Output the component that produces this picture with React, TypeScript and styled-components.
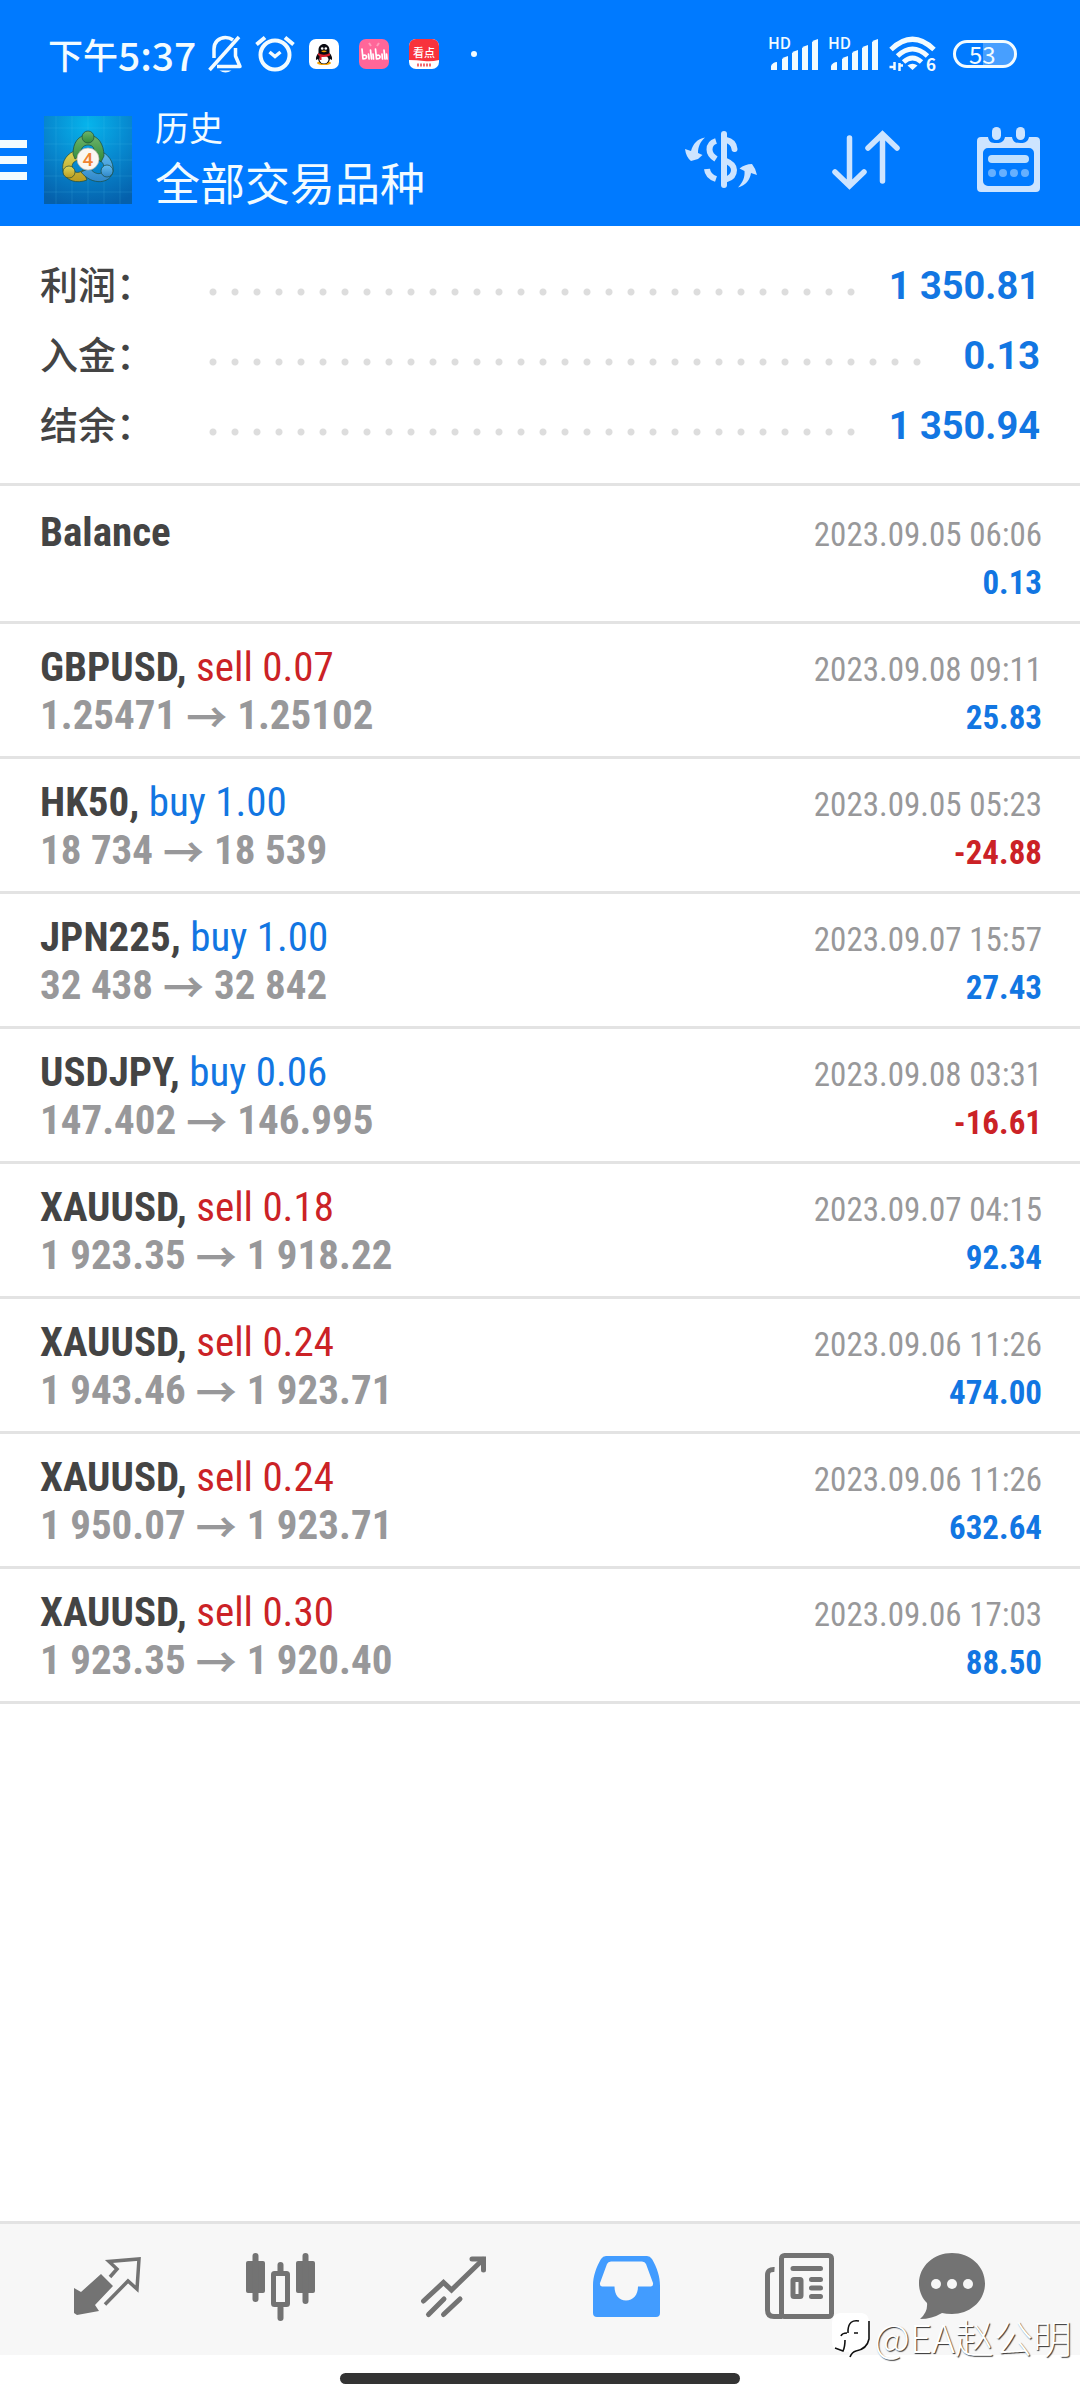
import React from "react";
import styled, { createGlobalStyle } from "styled-components";

const cjk = `"Noto Sans CJK SC", sans-serif`;
const condensed = `"Roboto Condensed", "Liberation Sans Narrow", Roboto, "Noto Sans CJK SC", sans-serif`;

const color = {
  brand: "#007aff",
  text: "#444444",
  muted: "#98989a",
  up: "#1276e2",
  down: "#cb2226",
  line: "#e3e3e3",
  nav: "#737373",
};

const GlobalStyle = createGlobalStyle`
  * { box-sizing: border-box; }
  body { margin: 0; background: #fff; font-family: ${cjk}; color: ${color.text}; }
  h1, h2, p, ul, dl, dd, dt { margin: 0; padding: 0; font-weight: 400; }
  ul { list-style: none; }
  button { border: 0; padding: 0; background: none; color: inherit; font: inherit; }
  svg { display: block; flex: none; overflow: visible; }
`;

const Page = styled.div`
  position: relative;
  min-height: 100vh;
  display: flex;
  flex-direction: column;
`;

const Header = styled.header`
  background: ${color.brand};
  color: #f2fbff;
  height: 226px;
`;

const StatusBar = styled.div`
  height: 108px;
  padding: 0 63px 0 48px;
  display: flex;
  align-items: center;
  justify-content: space-between;
`;

const StatusGroup = styled.div<{ $gap: number }>`
  display: flex;
  align-items: center;
  gap: ${(p) => p.$gap}px;
`;

const Clock = styled.div`
  display: flex;
  align-items: center;
  font-size: 35px;
  line-height: 40px;
  font-weight: 500;
`;

const ClockDigits = styled.span`
  font-size: 39px;
`;

const StatusApps = styled.div`
  display: flex;
  align-items: center;
  gap: 20px;
  margin-left: 2px;
`;

const NoticeDot = styled.span`
  width: 6px;
  height: 6px;
  margin-left: 12px;
  border-radius: 50%;
  background: currentColor;
`;

const Battery = styled.div`
  width: 64px;
  height: 28px;
  margin-left: 5px;
  border: 3px solid currentColor;
  border-radius: 14px;
  display: flex;
  align-items: center;
  padding-left: 13px;
  font-size: 24px;
  line-height: 22px;
  background: linear-gradient(90deg, transparent 47%, #479fff 47%) padding-box;
`;

const Toolbar = styled.div`
  height: 104px;
  padding-right: 40px;
  display: flex;
  align-items: center;
`;

const MenuButton = styled.button`
  width: 44px;
  height: 44px;
  display: flex;
  flex-direction: column;
  justify-content: center;
  gap: 8px;
`;

const MenuBar = styled.span`
  width: 27px;
  height: 8px;
  background: #f2fbff;
`;

const Titles = styled.div`
  flex: 1;
  margin-left: 23px;
`;

const Title = styled.h1`
  font-size: 34px;
  line-height: 44px;
`;

const Subtitle = styled.p`
  font-size: 45px;
  line-height: 66px;
`;

const Actions = styled.div`
  display: flex;
  align-items: center;
  gap: 75px;
  color: #cde4ff;
`;

const Summary = styled.dl`
  padding: 24px 40px 23px;
  border-bottom: 3px solid ${color.line};
`;

const SummaryRow = styled.div`
  height: 70px;
  display: flex;
  align-items: center;
`;

const SummaryLabel = styled.dt`
  width: 162px;
  margin-bottom: 4px;
  font-size: 38px;
  line-height: 56px;
  font-weight: 500;
`;

const Leader = styled.span`
  flex: 1;
  height: 8px;
  margin: 14px 30px 0 0;
  background: radial-gradient(circle at 11px 4px, #dddddd 3px, transparent 4px) 0 0 / 22px 8px repeat-x;
`;

const SummaryValue = styled.dd`
  margin-top: 2px;
  font-family: Roboto, sans-serif;
  font-weight: 700;
  font-size: 38px;
  line-height: 56px;
  color: ${color.up};
`;

const Deals = styled.ul`
  flex: 1;
  padding-top: 3px;
`;

const Deal = styled.li`
  height: 135px;
  padding: 19px 38px 0 40px;
  border-bottom: 3px solid ${color.line};
  font-family: ${condensed};
  display: flex;
  justify-content: space-between;
`;

const DealMain = styled.div`
  font-size: 41px;
  line-height: 48px;
  font-weight: 700;
`;

const Side = styled.span<{ $sell: boolean }>`
  font-weight: 400;
  color: ${(p) => (p.$sell ? color.down : color.up)};
`;

const Prices = styled.p`
  display: flex;
  gap: 10px;
  font-weight: 700;
  color: ${color.muted};
`;

const Arrow = styled.span`
  font-family: ${cjk};
`;

const DealInfo = styled.div`
  padding-top: 3px;
  font-size: 33px;
  line-height: 48px;
  text-align: right;
`;

const Time = styled.time`
  display: block;
  color: ${color.muted};
`;

const Profit = styled.p<{ $loss: boolean }>`
  font-weight: 700;
  color: ${(p) => (p.$loss ? color.down : color.up)};
`;

const Nav = styled.nav`
  height: 134px;
  padding: 0 21px 6px;
  display: flex;
  align-items: center;
  background: #f7f7f7;
  border-top: 3px solid ${color.line};
`;

const NavButton = styled.button<{ $active?: boolean }>`
  flex: 1;
  height: 100px;
  display: grid;
  place-items: center;
  color: ${(p) => (p.$active ? "#429cff" : color.nav)};
`;

const HomeArea = styled.div`
  height: 45px;
  padding-top: 18px;
`;

const HomePill = styled.div`
  width: 37%;
  height: 11px;
  margin: 0 auto;
  border-radius: 6px;
  background: #333;
`;

const Watermark = styled.div`
  position: absolute;
  right: 8px;
  bottom: 36px;
  display: flex;
  align-items: center;
  gap: 4px;
  font-size: 39px;
  line-height: 56px;
  font-weight: 300;
  color: #fff;
  text-shadow: 1px 1px 1px rgba(0, 0, 0, 0.8);
`;

const BellOff = () => (
  <svg width="35" height="38" viewBox="0 0 35 38" fill="none" stroke="currentColor" strokeWidth="3.500">
    <path d="M6 23V14C6 7 11 2.500 17.500 2.500C20.500 2.500 23 3.500 25 5" />
    <path d="M27.500 13V21L32 31.500H9" strokeLinejoin="round" />
    <path d="M1.500 35L31 2" />
    <path d="M11.500 35.500H23.500Q17.500 39.500 11.500 35.500Z" fill="currentColor" stroke="none" />
  </svg>
);

const Alarm = () => (
  <svg width="40" height="38" viewBox="0 0 40 38" fill="none" stroke="currentColor" strokeWidth="4">
    <circle cx="20" cy="20" r="14.500" />
    <path d="M1.500 9.500L10 2.500M30 2.500L38.500 9.500" />
    <path d="M14.500 17L20 21.500L25.500 17" strokeWidth="3.500" />
  </svg>
);

const PenguinApp = () => (
  <svg width="30" height="30" viewBox="0 0 30 30">
    <rect width="30" height="30" rx="7" fill="#fff" />
    <ellipse cx="15" cy="24" rx="7" ry="2" fill="#f6a300" />
    <path d="M7 21C6.500 18 8 15.500 9.500 14V11C9.500 7.500 12 5 15 5S20.500 7.500 20.500 11V14C22 15.500 23.500 18 23 21L21 20C20.500 23 18.500 25 15 25S9.500 23 9 20Z" fill="#0b0b12" />
    <ellipse cx="15" cy="20.500" rx="4.500" ry="4" fill="#fff" />
    <circle cx="13.200" cy="9.500" r="1.300" fill="#fff" />
    <circle cx="16.800" cy="9.500" r="1.300" fill="#fff" />
    <path d="M12 12Q15 11 18 12Q15 14.500 12 12Z" fill="#f6a300" />
    <path d="M9 14Q15 17.500 21 14V16.500Q17 18.500 12.500 18V21H10.500V17L9 16Z" fill="#d8202c" />
  </svg>
);

const VideoApp = () => (
  <svg width="30" height="30" viewBox="0 0 30 30">
    <rect width="30" height="30" rx="7" fill="#ff6699" />
    <path d="M10 4L12 7M20 4L18 7" stroke="#ff9dbd" strokeWidth="2" />
    <g fill="none" stroke="#fff" strokeWidth="1.700" strokeLinecap="round" strokeLinejoin="round">
      <path d="M3 10L4 20Q8 20 7.500 17.500Q7 15.500 4 16.500M9.500 15L10 20M11.500 11L12.500 20M14 15L14.500 20" />
      <path d="M16.500 10L17.500 20Q21.500 20 21 17.500Q20.500 15.500 17.500 16.500M23 15L23.500 20M25 11L26 20M27.500 15L28 20" />
    </g>
  </svg>
);

const NewsApp = () => (
  <svg width="30" height="30" viewBox="0 0 30 30">
    <rect width="30" height="30" rx="7" fill="#fff" />
    <path d="M0 21V7A7 7 0 0 1 7 0H23A7 7 0 0 1 30 7V21Q22 23 15 22T0 21Z" fill="#f8333c" />
    <text x="15" y="18" textAnchor="middle" fontFamily="Noto Sans CJK SC" fontWeight="500" fontSize="11" fill="#fff">看点</text>
    <path d="M8 26H22" stroke="#f26a70" strokeWidth="3" strokeDasharray="2 1" />
  </svg>
);

const Signal = () => (
  <svg width="49" height="34" viewBox="0 0 49 34" fill="currentColor">
    <text x="-1" y="12" fontFamily="Noto Sans CJK SC" fontWeight="500" fontSize="16">HD</text>
    <path d="M2 33V29Q4 25 8 25V33Z" />
    <path d="M13 33V22Q15 20 19 19V33Z" />
    <path d="M23 33V16Q25 14 29 13V33Z" />
    <path d="M33 33V11Q35 9 39 8V33Z" />
    <path d="M43 33V5Q45 3 49 2V33Z" />
  </svg>
);

const Wifi = () => (
  <svg width="48" height="36" viewBox="0 0 48 36" fill="none" stroke="currentColor" strokeWidth="5">
    <path d="M2 13.500Q23.500 -7 45 13.500" />
    <path d="M8.500 20Q23.500 6 38.500 20" />
    <path d="M14.500 26Q23.500 18 32.500 26" />
    <path d="M23.500 34L18.500 29.500Q23.500 26 28.500 29.500Z" fill="currentColor" stroke="none" />
    <path d="M5.500 26V34M0.500 31H5.500M10.500 35V27M10.500 29.500H14" strokeWidth="2.500" />
    <text x="37" y="35" fontFamily="Noto Sans CJK SC" fontWeight="700" fontSize="17" fill="currentColor" stroke="none">6</text>
  </svg>
);

const Logo = () => (
  <svg width="88" height="88" viewBox="0 0 88 88">
    <defs>
      <radialGradient id="sky" cx="0.5" cy="0.1" r="0.95">
        <stop offset="0" stopColor="#06b4ec" />
        <stop offset="0.5" stopColor="#0788cf" />
        <stop offset="1" stopColor="#0560ab" />
      </radialGradient>
      <linearGradient id="green" x1="0" y1="0" x2="0" y2="1">
        <stop offset="0" stopColor="#6fb56b" />
        <stop offset="1" stopColor="#2f8a3a" />
      </linearGradient>
      <linearGradient id="yellow" x1="0" y1="0" x2="0" y2="1">
        <stop offset="0" stopColor="#ddd85a" />
        <stop offset="1" stopColor="#b89a20" />
      </linearGradient>
      <linearGradient id="azure" x1="0" y1="0" x2="0" y2="1">
        <stop offset="0" stopColor="#63bdf0" />
        <stop offset="1" stopColor="#2f86c8" />
      </linearGradient>
    </defs>
    <rect width="88" height="88" fill="url(#sky)" />
    <path d="M12 0V88M28 0V88M44 0V88M60 0V88M76 0V88M0 12H88M0 28H88M0 44H88M0 60H88M0 76H88" stroke="#5cc6f0" strokeOpacity="0.16" />
    <g stroke="#1d4a3c" strokeWidth="0.700">
      <path d="M34 34C23 36 17 46 19 55C21 65 33 68 43 64L39 54C35 58 28 57 28 51C28 47 31 44 36 44Z" fill="url(#yellow)" />
      <path d="M55 35C64 37 70 46 69 55C67 68 48 70 37 56L46 52C51 60 60 59 60 52C60 47 57 44 52 44Z" fill="url(#azure)" />
      <path d="M29 38C29 27 34 19 44 19S60 28 60 40L57 46L50 40C51 32 49 29 44 29S36 33 37 39L31 43Z" fill="url(#green)" />
      <circle cx="44" cy="21" r="6" fill="url(#green)" />
      <circle cx="25" cy="56" r="6" fill="url(#yellow)" />
      <circle cx="63" cy="55" r="6" fill="url(#azure)" />
    </g>
    <circle cx="44" cy="43" r="11" fill="#faf7f2" stroke="#b9b3a6" strokeWidth="0.700" />
    <text x="44" y="50" textAnchor="middle" fontFamily="Roboto" fontWeight="500" fontSize="19" fill="#f08432">4</text>
  </svg>
);

const Currency = () => (
  <svg width="72" height="58" viewBox="0 0 72 58" fill="none" stroke="currentColor" strokeWidth="6">
    <path d="M31 10C26 11.500 24.500 15 24.500 18.500C24.500 22.500 27 25.500 31 28" />
    <path d="M22 38C22.500 43 26.500 46.500 31 48" />
    <path d="M39 3V54" strokeLinecap="round" />
    <path d="M41 9C46 10 49 13 49.500 18" strokeLinecap="round" />
    <path d="M41 30C46 32 49 35 49 39C49 44 46 47 41 48.500" />
    <g fill="currentColor" stroke="none">
      <path d="M0 18L6 20C8 13 12 8 20 6.500C15 11 13 16 13 22L17.500 24L13 28L6 30Q1 26 0 18Z" />
      <path d="M72 44L66 42C65 49 61 54 53 56.500C58 51 60 46 59.500 40L54.500 37.500Q60 33 67 33Q71 38 72 44Z" />
    </g>
  </svg>
);

const Sort = () => (
  <svg width="70" height="60" viewBox="0 0 70 60" fill="none" stroke="currentColor" strokeWidth="5.500" strokeLinecap="round">
    <path d="M17.500 8V55M3 42L17.500 56L32 42" />
    <path d="M50.500 51V5M36 18L50.500 4L65 18" />
  </svg>
);

const Calendar = () => (
  <svg width="63" height="66" viewBox="0 0 63 66" fill="currentColor">
    <path fillRule="evenodd" d="M4 10H11C12 15 14 16 19.500 16S27 14 28 10H35C36 15 38 16 43.500 16S51 14 52 10H59A4 4 0 0 1 63 14V61A4 4 0 0 1 59 65H4A4 4 0 0 1 0 61V14A4 4 0 0 1 4 10ZM11 21A5 5 0 0 0 6 26V54A5 5 0 0 0 11 59H52A5 5 0 0 0 57 54V26A5 5 0 0 0 52 21Z" />
    <rect x="15" y="0" width="9" height="13" rx="4.500" />
    <rect x="39" y="0" width="9" height="13" rx="4.500" />
    <rect x="11" y="28" width="41" height="8" rx="4" fill="#bfe0ff" />
    <g fill="#66b0ff">
      <circle cx="15" cy="46" r="4" />
      <circle cx="26" cy="46" r="4" />
      <circle cx="37" cy="46" r="4" />
      <circle cx="48" cy="46" r="4" />
    </g>
  </svg>
);

const QuotesIcon = () => (
  <svg width="67" height="68" viewBox="0 -4 67 68" fill="currentColor">
    <path d="M0 31L7 35L27 17L39 29L21 48L25 54L3 58L0 56Z" />
    <path d="M36 20L43 12L35 4.500L65 2L63 32L54 24L31 47.500" fill="none" stroke="currentColor" strokeWidth="3.500" />
  </svg>
);

const ChartIcon = () => (
  <svg width="70" height="68" viewBox="0 0 70 68" fill="currentColor">
    <rect x="0" y="8" width="19" height="32" rx="2" />
    <rect x="6.500" y="0" width="6" height="49" rx="3" />
    <rect x="50" y="8" width="19" height="32" rx="2" />
    <rect x="56.500" y="0" width="6" height="51" rx="3" />
    <rect x="31.500" y="9" width="6" height="12" rx="3" />
    <rect x="31.500" y="52" width="6" height="16" rx="3" />
    <rect x="27.500" y="20.500" width="14" height="31" rx="1" fill="none" stroke="currentColor" strokeWidth="5" />
  </svg>
);

const TradeIcon = () => (
  <svg width="66" height="68" viewBox="0 -3 66 68" fill="none" stroke="currentColor" strokeWidth="5" strokeLinecap="round">
    <path d="M2.500 45L22.500 26.500L30.500 34L62 3.500" />
    <path d="M51 3H62.500V14" />
    <path d="M7.500 58.500L23 43M22.500 58.500L39 43" />
  </svg>
);

const HistoryIcon = () => (
  <svg width="67" height="68" viewBox="0 -3 67 68" fill="currentColor">
    <path fillRule="evenodd" d="M13 0H54Q57 0 59 3C64 12 67 20 67 30V57A4 4 0 0 1 63 61H4A4 4 0 0 1 0 57V30C0 20 3 12 8 3Q10 0 13 0ZM18 5.500Q15 5.500 14 8L7 27Q6.500 30.500 9 30.500H21.500C21.500 39 26 44.500 33 44.500S45 39 45 30.500H58Q60.500 30.500 60 27L53 8Q52 5.500 49 5.500Z" />
  </svg>
);

const NewsIcon = () => (
  <svg width="69" height="68" viewBox="0 0 69 68" fill="none" stroke="currentColor" strokeWidth="5">
    <rect x="16.500" y="2.500" width="50" height="61" rx="3" />
    <path d="M9.500 16.500Q2.500 16 2.500 22V57Q2.500 63.500 9 63.500H17" />
    <path d="M28 15.500H55.500M46.500 26.500H55.500M46.500 35H55.500M46.500 43.500H55.500" strokeLinecap="round" />
    <rect x="28" y="26.500" width="8" height="17" rx="1" />
  </svg>
);

const ChatIcon = () => (
  <svg width="108" height="68" viewBox="0 0 108 68" fill="currentColor">
    <path d="M33 0C51 0 66 13 66 30.500S51 61 33 61Q27 61 23 60Q13 66 1 66Q9 59 8 50C3 45 0 38 0 30.500C0 13 15 0 33 0Z" />
    <g fill="#f7f7f7">
      <circle cx="17" cy="31" r="5" />
      <circle cx="33" cy="31" r="5" />
      <circle cx="49" cy="31" r="5" />
    </g>
  </svg>
);

const WatermarkLogo = () => (
  <svg width="38" height="46" viewBox="0 0 38 46">
    <path d="M8 0H30Q37 1 37 9V26Q36 37 24 39L18 45L17 39L6 38Q0 36 0 28V9Q0 1 8 0Z" fill="#fff" />
    <path d="M37 8V26Q35 36 24 38Q20 39 18 44M27 8Q17 6 16 17V20M9 23Q10 20 15 20M22 20H26M13 27Q13 34 11 38L3 35" fill="none" stroke="#111" strokeWidth="1.600" />
  </svg>
);

const summary = [
  ["利润：", "1 350.81"],
  ["入金：", "0.13"],
  ["结余：", "1 350.94"],
];

type DealData = { symbol: string; side?: string; open?: string; close?: string; time: string; profit: string };

const deals: DealData[] = [
  { symbol: "Balance", time: "2023.09.05 06:06", profit: "0.13" },
  { symbol: "GBPUSD", side: "sell 0.07", open: "1.25471", close: "1.25102", time: "2023.09.08 09:11", profit: "25.83" },
  { symbol: "HK50", side: "buy 1.00", open: "18 734", close: "18 539", time: "2023.09.05 05:23", profit: "-24.88" },
  { symbol: "JPN225", side: "buy 1.00", open: "32 438", close: "32 842", time: "2023.09.07 15:57", profit: "27.43" },
  { symbol: "USDJPY", side: "buy 0.06", open: "147.402", close: "146.995", time: "2023.09.08 03:31", profit: "-16.61" },
  { symbol: "XAUUSD", side: "sell 0.18", open: "1 923.35", close: "1 918.22", time: "2023.09.07 04:15", profit: "92.34" },
  { symbol: "XAUUSD", side: "sell 0.24", open: "1 943.46", close: "1 923.71", time: "2023.09.06 11:26", profit: "474.00" },
  { symbol: "XAUUSD", side: "sell 0.24", open: "1 950.07", close: "1 923.71", time: "2023.09.06 11:26", profit: "632.64" },
  { symbol: "XAUUSD", side: "sell 0.30", open: "1 923.35", close: "1 920.40", time: "2023.09.06 17:03", profit: "88.50" },
];

const tabs = [
  { label: "行情", Icon: QuotesIcon },
  { label: "图表", Icon: ChartIcon },
  { label: "交易", Icon: TradeIcon },
  { label: "历史", Icon: HistoryIcon, active: true },
  { label: "新闻", Icon: NewsIcon },
  { label: "消息", Icon: ChatIcon },
];

export default function App() {
  return (
    <Page>
      <GlobalStyle />
      <Header>
        <StatusBar>
          <StatusGroup $gap={12}>
            <Clock>
              下午<ClockDigits>5:37</ClockDigits>
            </Clock>
            <BellOff />
            <Alarm />
            <StatusApps>
              <PenguinApp />
              <VideoApp />
              <NewsApp />
              <NoticeDot />
            </StatusApps>
          </StatusGroup>
          <StatusGroup $gap={11}>
            <Signal />
            <Signal />
            <Wifi />
            <Battery>53</Battery>
          </StatusGroup>
        </StatusBar>
        <Toolbar>
          <MenuButton aria-label="菜单">
            <MenuBar />
            <MenuBar />
            <MenuBar />
          </MenuButton>
          <Logo />
          <Titles>
            <Title>历史</Title>
            <Subtitle>全部交易品种</Subtitle>
          </Titles>
          <Actions>
            <button aria-label="交易品种"><Currency /></button>
            <button aria-label="排序"><Sort /></button>
            <button aria-label="日期"><Calendar /></button>
          </Actions>
        </Toolbar>
      </Header>

      <Summary>
        {summary.map(([label, value]) => (
          <SummaryRow key={label}>
            <SummaryLabel>{label}</SummaryLabel>
            <Leader />
            <SummaryValue>{value}</SummaryValue>
          </SummaryRow>
        ))}
      </Summary>

      <Deals>
        {deals.map((d, i) => (
          <Deal key={i}>
            <DealMain>
              <div>
                {d.symbol}
                {d.side && (
                  <>
                    , <Side $sell={d.side.startsWith("sell")}>{d.side}</Side>
                  </>
                )}
              </div>
              {d.open && (
                <Prices>
                  <span>{d.open}</span>
                  <Arrow>→</Arrow>
                  <span>{d.close}</span>
                </Prices>
              )}
            </DealMain>
            <DealInfo>
              <Time>{d.time}</Time>
              <Profit $loss={d.profit.startsWith("-")}>{d.profit}</Profit>
            </DealInfo>
          </Deal>
        ))}
      </Deals>

      <Nav>
        {tabs.map(({ label, Icon, active }) => (
          <NavButton key={label} aria-label={label} $active={active}>
            <Icon />
          </NavButton>
        ))}
      </Nav>
      <HomeArea>
        <HomePill />
      </HomeArea>
      <Watermark>
        <WatermarkLogo />
        @EA赵公明
      </Watermark>
    </Page>
  );
}
